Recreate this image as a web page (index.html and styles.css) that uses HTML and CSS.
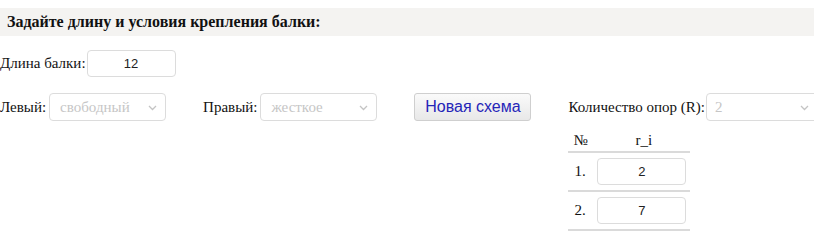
FILE: index.html
```html
<!DOCTYPE html>
<html lang="ru">
<head>
  <meta charset="UTF-8">
  <title>Балка</title>
  <link rel="stylesheet" href="styles.css">
</head>
<body>
  <h3 class="title">Задайте длину и условия крепления балки:</h3>
  <div class="row row-length">
    <label class="lbl">Длина балки:</label>
    <input class="num" type="text" value="12">
  </div>
  <div class="row row-ends">
    <div class="group">
      <label class="lbl">Левый:</label>
      <div class="sel">
        <select disabled><option>свободный</option></select>
        <svg class="chev" width="9" height="6" viewBox="0 0 9 6"><path d="M1 1l3.5 3.5L8 1" fill="none" stroke="#c4c4c4" stroke-width="1.3"/></svg>
      </div>
    </div>
    <div class="group">
      <label class="lbl">Правый:</label>
      <div class="sel">
        <select disabled><option>жесткое</option></select>
        <svg class="chev" width="9" height="6" viewBox="0 0 9 6"><path d="M1 1l3.5 3.5L8 1" fill="none" stroke="#c4c4c4" stroke-width="1.3"/></svg>
      </div>
    </div>
    <button class="btn">Новая схема</button>
    <div class="supports">
      <div class="group">
        <label class="lbl">Количество опор (R):</label>
        <div class="sel sel-r">
          <select disabled><option>2</option></select>
          <svg class="chev" width="9" height="6" viewBox="0 0 9 6"><path d="M1 1l3.5 3.5L8 1" fill="none" stroke="#c4c4c4" stroke-width="1.3"/></svg>
        </div>
      </div>
      <table class="tbl">
        <tr><th class="c-n">№</th><th>r_i</th></tr>
        <tr><td class="c-n">1.</td><td><input class="num num-r" type="text" value="2"></td></tr>
        <tr><td class="c-n">2.</td><td><input class="num num-r" type="text" value="7"></td></tr>
      </table>
    </div>
  </div>
</body>
</html>
```

FILE: styles.css
```css
html, body { margin: 0; padding: 0; background: #fff; overflow: hidden; font-family: "Liberation Serif", "Times New Roman", serif; font-size: 15px; color: #111; }
.title { margin: 8px 0 0; height: 28px; line-height: 28px; padding: 0 7px; background: #f4f3f1; font-size: 16px; font-weight: bold; }
.row { display: flex; align-items: flex-start; }
.row > * { flex-shrink: 0; }
.row-length { margin-top: 14px; align-items: center; }
.row-ends { margin-top: 16px; gap: 37px; }
.group { display: flex; align-items: center; gap: 3px; height: 28px; }
.supports .group { gap: 1px; }
.lbl { white-space: nowrap; }
.num { box-sizing: border-box; width: 89px; height: 27px; border: 1px solid #dcdcdc; border-radius: 4px; text-align: center; font-family: "Liberation Sans", Arial, sans-serif; font-size: 13px; color: #222; padding: 0; outline: none; }
.row-length .num { margin-left: 1px; }
.sel { position: relative; }
.sel select { box-sizing: border-box; width: 117px; height: 28px; appearance: none; -webkit-appearance: none; background: #fff; border: 1px solid #dcdcdc; border-radius: 4px; padding: 0 10px; font-family: "Liberation Serif", "Times New Roman", serif; font-size: 15px; color: #c6c6c6; opacity: 1; }
.sel-r select { width: 112px; padding: 0 8px; }
.chev { position: absolute; right: 9px; top: 12px; }
.btn { box-sizing: border-box; width: 117px; height: 28px; border: 1px solid #cfcfcf; border-radius: 3px; background: linear-gradient(#fafafa, #e8e8e8); font-family: "Liberation Sans", Arial, sans-serif; font-size: 16px; color: #2525b8; padding: 0; cursor: pointer; }
.supports { display: flex; flex-direction: column; }
.tbl { border-collapse: collapse; width: 122px; }
.tbl th { font-weight: normal; height: 28px; padding: 0 0 2px; vertical-align: bottom; border-bottom: 2px solid #dadada; text-align: center; }
.tbl th.c-n { text-align: left; padding-left: 5px; }
.tbl td { height: 37px; padding: 0; border-bottom: 2px solid #dadada; }
.tbl td.c-n { width: 23px; padding-left: 6px; }
```
